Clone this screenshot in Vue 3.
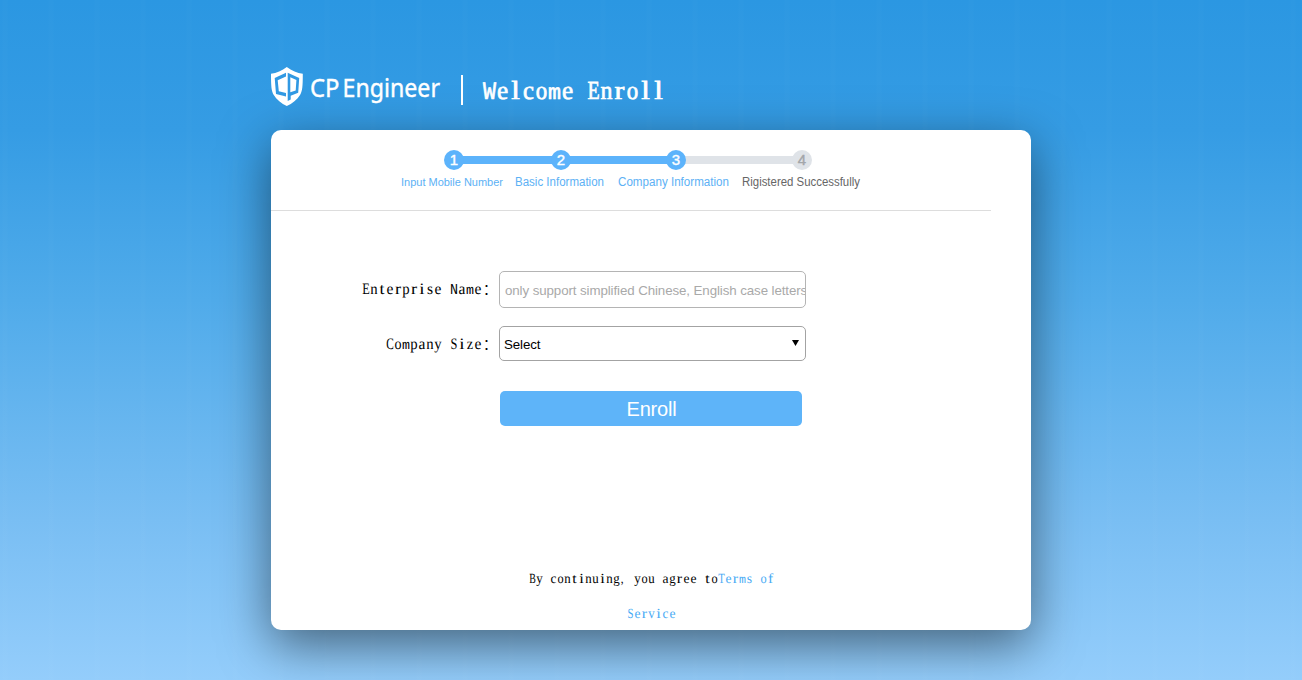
<script setup>
import { h } from 'vue'

const steps = [
  { n: 1, label: 'Input Mobile Number', state: 'done', cls: 'l1' },
  { n: 2, label: 'Basic Information', state: 'done', cls: 'l2' },
  { n: 3, label: 'Company Information', state: 'done', cls: 'l3' },
  { n: 4, label: 'Rigistered Successfully', state: 'todo', cls: 'l4' },
]

// Share of a half-width cell that a letter fills; the rest use 0.92.
const FILL = { i: 0.66, l: 0.66, t: 0.62, r: 0.76, f: 0.74, s: 0.76, z: 0.8, S: 0.86, e: 0.86, c: 0.84, a: 0.86, o: 0.88, ',': 0.4 }
// Letters too wide for a cell in the serif face, with the size they take in the monospaced one.
const WIDE = { m: 0.83, W: 0.96, N: 0.96 }

// Serif text with every letter fitted to a cell of equal width.
function CellText({ text, size, y, height }) {
  const cell = size / 2
  const letters = [...text].map((c, i) => {
    if (WIDE[c]) {
      const attrs = { x: i * cell, 'font-family': '"Liberation Mono", monospace', 'font-size': size * WIDE[c] }
      if (c !== 'm') Object.assign(attrs, { textLength: cell, lengthAdjust: 'spacingAndGlyphs' })
      return h('tspan', attrs, c)
    }
    const share = FILL[c] ?? (/[A-Z]/.test(c) ? 0.94 : 0.92)
    const w = c === ' ' ? cell * 0.5 : cell * share
    const x = i * cell + (c === ',' ? cell * 0.1 : (cell - w) / 2)
    return h('tspan', { x, textLength: w, lengthAdjust: 'spacingAndGlyphs' }, c)
  })
  return h(
    'svg',
    { width: text.length * cell, height, style: { display: 'block', overflow: 'visible' } },
    [h('text', { y, 'font-size': size, 'font-family': '"Liberation Serif", "Times New Roman", serif', fill: 'currentColor', 'text-rendering': 'geometricPrecision' }, letters)],
  )
}
CellText.props = ['text', 'size', 'y', 'height']
</script>

<template>
  <div class="page">
    <main class="wrap">
      <header class="head">
        <svg class="logo" width="170" height="42" viewBox="0 0 170 42">
          <path fill="#fff" d="M15.800 1C11 4.600 5.500 7 0 7.800C0 20 0.400 25 2.600 28.800C5.500 33.700 10.500 37.700 15.800 40C21.200 37.700 26.300 33.700 29.200 28.800C31.400 25 31.800 20 31.800 7.800C26.200 7 20.700 4.600 15.800 1Z" />
          <path class="cut" d="M15 6.700L3.700 12L5 28L15 30.400V26.900L7.800 25.200L6.700 14.200L15 10.600Z" />
          <path class="cut" fill-rule="evenodd" d="M16.700 6.700L28.200 12L27.200 26.800L19.700 29.700V33.500L16.700 35ZM19.300 11.300V26.200L24.700 24.500L25.400 14.100Z" />
          <text x="39" y="31" textLength="29.500" lengthAdjust="spacingAndGlyphs">CP</text>
          <text x="71.500" y="31" textLength="97.500" lengthAdjust="spacingAndGlyphs">Engineer</text>
        </svg>
        <i class="bar"></i>
        <h1><CellText text="Welcome Enroll" :size="26" :y="33" :height="42" /></h1>
      </header>

      <section class="card">
        <div class="steps">
          <div class="track">
            <template v-for="s in steps" :key="s.n">
              <i v-if="s.n > 1" class="line" :class="[s.state, 'seg' + s.n]"></i>
              <b class="dot" :class="s.state">{{ s.n }}</b>
            </template>
          </div>
          <div class="labels">
            <svg v-for="s in steps" :key="s.n" class="lab" :class="[s.state, s.cls]">
              <text x="0" y="13" textLength="100%" lengthAdjust="spacingAndGlyphs">{{ s.label }}</text>
            </svg>
          </div>
        </div>

        <form class="form" @submit.prevent>
          <div class="row">
            <label><CellText text="Enterprise Name" :size="16" :y="23" :height="35" /><span class="colon">：</span></label>
            <input class="field" type="text" placeholder="only support simplified Chinese, English case letters" />
          </div>
          <div class="row second">
            <label><CellText text="Company Size" :size="16" :y="23" :height="35" /><span class="colon">：</span></label>
            <div class="field select">
              <span>Select</span>
              <svg width="7" height="6" viewBox="0 0 7 6"><path d="M0 0H7L3.500 6Z" /></svg>
            </div>
          </div>
          <button class="enroll">Enroll</button>
        </form>

        <div class="terms">
          <p>
            <CellText text="By continuing, you agree to" :size="14" :y="23" :height="35" />
            <a><CellText text="Terms of" :size="14" :y="23" :height="35" /></a>
          </p>
          <p><a><CellText text="Service" :size="14" :y="23" :height="35" /></a></p>
        </div>
      </section>
    </main>
  </div>
</template>

<style>
body { margin: 0; overflow: hidden; }
</style>

<style scoped>
* { box-sizing: border-box; }
.page {
  height: 680px;
  background:
    repeating-linear-gradient(90deg, transparent 0 2px, rgba(255,255,255,.01) 3px 7px, transparent 8px 46px),
    linear-gradient(#2b97e2 0, #359ce4 130px, #50abea 300px, #79bef3 520px, #94cdfb 680px);
  font-family: "Liberation Sans", Arial, sans-serif;
}
.wrap { width: 760px; margin: 0 auto; padding-top: 66px; }
.head { height: 64px; display: flex; align-items: flex-start; color: #fff; }
.logo { flex: none; overflow: visible; }
.logo text { font: 25px "Noto Sans", "Open Sans", sans-serif; fill: #fff; stroke: #fff; stroke-width: .4px; }
.cut { fill: #3199e3; }
.bar { width: 2px; height: 30px; margin: 9px 0 0 20px; background: #fff; }
h1 {
  margin: 0 0 0 20px; font-weight: 400;
  stroke: #fff; stroke-width: .7px;
}
.card {
  height: 500px; background: #fff; border-radius: 10px;
  box-shadow: 0 15px 50px rgba(0,0,0,.5);
  display: flex; flex-direction: column;
}
.steps { width: 720px; height: 81px; padding-top: 20px; border-bottom: 1px solid #ddd; flex: none; }
.track { display: flex; align-items: center; padding-left: 173px; height: 20px; }
.dot {
  width: 20px; height: 20px; border-radius: 50%; text-align: center;
  font: 15px/20px "Liberation Sans", Arial, sans-serif; flex: none;
  -webkit-text-stroke: .4px currentColor;
}
.line { height: 8px; margin: 0 -1px; }
.line.done, .dot.done { background: #5cb3fb; }
.line.todo, .dot.todo { background: #dfe3e8; }
.dot.done { color: #fff; position: relative; }
.dot.todo { color: #a3a6aa; }
.seg2 { width: 89px; }
.seg3 { width: 97px; }
.seg4 { width: 108px; }
.labels { display: flex; padding-left: 130px; margin-top: 3px; }
.lab { height: 18px; flex: none; overflow: visible; font-size: 12px; }
.lab.done { fill: #5cb1f5; }
.lab.todo { fill: #666; }
.l1 { width: 102px; margin-right: 12px; font-size: 11px; }
.l2 { width: 89px; margin-right: 14px; }
.l3 { width: 111px; margin-right: 13px; }
.l4 { width: 118px; }
.form { padding-top: 60px; height: 297px; flex: none; }
.row { display: flex; height: 37px; align-items: flex-start; }
.row.second { margin-top: 18px; height: 35px; }
label { width: 228px; display: flex; justify-content: flex-end; align-items: flex-start; padding-right: 1px; flex: none; color: #000; }
.colon { width: 16px; margin-top: 7px; font: 14px/20px "Noto Sans CJK SC", sans-serif; text-indent: 1px; }
.field {
  width: 307px; height: 37px; border: 1px solid #b4b4b4; border-radius: 5px;
  padding: 2px 0 0 5px; background: #fff; outline: 0;
  font: 13.333px "Liberation Sans", Arial, sans-serif;
  letter-spacing: -.1px;
}
.field::placeholder { color: #a9a9a9; opacity: 1; }
.select { height: 35px; border-color: #a3a3a3; display: flex; align-items: center; justify-content: space-between; padding: 2px 6px 0 4px; }
.select svg { margin-top: -3px; }
.enroll {
  display: block; width: 302px; height: 35px; margin: 30px 0 0 229px; padding: 1px 0 0 1px;
  border: 0; border-radius: 5px; background: #5eb4f9; color: #fff;
  font: 20px "Liberation Sans", Arial, sans-serif; letter-spacing: -.2px;
}
.terms { margin-top: 52px; color: #000; }
.terms p { margin: 0; height: 35px; display: flex; justify-content: center; }
.terms a { color: #4aabf5; }
</style>
